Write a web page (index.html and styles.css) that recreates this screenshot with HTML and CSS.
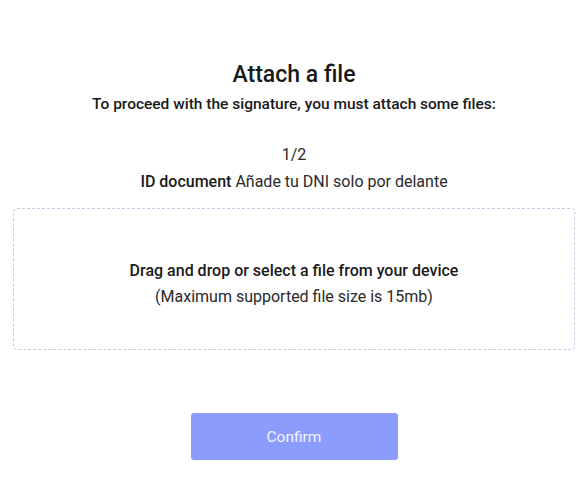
FILE: index.html
```html
<!DOCTYPE html>
<html lang="en">
<head>
<meta charset="utf-8">
<title>Attach a file</title>
<link rel="stylesheet" href="styles.css">
</head>
<body>
<main class="page">
  <h1 class="title">Attach a file</h1>
  <p class="subtitle">To proceed with the signature, you must attach some files:</p>
  <div class="step">
    <div class="counter">1/2</div>
    <div class="doc"><strong>ID document</strong> Añade tu DNI solo por delante</div>
  </div>
  <div class="dropzone">
    <p class="drop-main">Drag and drop or select a file from your device</p>
    <p class="drop-sub">(Maximum supported file size is 15mb)</p>
  </div>
  <div class="actions">
    <button class="confirm" type="button">Confirm</button>
  </div>
</main>
</body>
</html>
```

FILE: styles.css
```css
html, body {
  margin: 0;
  padding: 0;
  background: #ffffff;
}
body {
  font-family: Roboto, "Liberation Sans", sans-serif;
  color: #1f1f1f;
}
.page {
  display: flex;
  flex-direction: column;
  align-items: stretch;
  padding: 0 3px 0 13px;
  text-align: center;
}
.title {
  margin: 61px 0 0;
  font-size: 23px;
  font-weight: 500;
  line-height: 28px;
  color: #1a1a1a;
}
.subtitle {
  margin: 5px 0 0;
  font-size: 15.5px;
  font-weight: 500;
  line-height: 20px;
  color: #1a1a1a;
}
.step {
  margin-top: 31px;
  font-size: 16px;
  line-height: 20px;
  color: #2a2a2a;
}
.counter {
  margin-bottom: 7px;
}
.doc strong {
  font-weight: 500;
  color: #1a1a1a;
}
.dropzone {
  margin-top: 16px;
  height: 142px;
  padding-top: 10px;
  box-sizing: border-box;
  border: 1px dashed #c9c9e4;
  border-radius: 4px;
  display: flex;
  flex-direction: column;
  justify-content: center;
  align-items: center;
  gap: 6px;
}
.drop-main {
  margin: 0;
  font-size: 16px;
  font-weight: 500;
  line-height: 20px;
  color: #1a1a1a;
}
.drop-sub {
  margin: 0;
  font-size: 16px;
  line-height: 20px;
  color: #2a2a2a;
}
.actions {
  display: flex;
  justify-content: center;
  margin-top: 63px;
}
.confirm {
  width: 207px;
  height: 47px;
  border: none;
  border-radius: 3px;
  background: #8c9cfc;
  color: #f4f5ff;
  font-family: Roboto, "Liberation Sans", sans-serif;
  font-size: 15.5px;
  font-weight: 400;
}
```
